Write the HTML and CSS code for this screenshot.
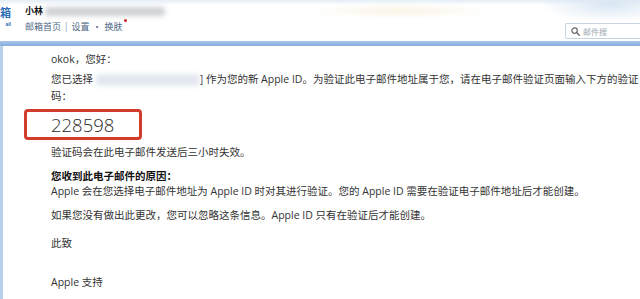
FILE: index.html
```html
<!DOCTYPE html>
<html lang="zh-CN">
<head>
<meta charset="utf-8">
<title>邮箱 - Apple ID 验证</title>
<link rel="stylesheet" href="styles.css">
</head>
<body>
<div class="page">
  <header class="header">
    <div class="logo">
      <span class="logo-cn">箱</span>
      <span class="logo-en">ail</span>
    </div>
    <div class="user">
      <div class="user-name"><b>小林</b><span class="blur-name"></span></div>
      <div class="user-links">
        <span>邮箱首页</span><span class="sep">|</span><span>设置</span><span class="dot-sep">·</span><span class="skin">换肤<i class="red-dot"></i></span>
      </div>
    </div>
    <div class="search">
      <svg class="search-icon" width="9" height="9" viewBox="0 0 10 10"><circle cx="4" cy="4" r="3" fill="none" stroke="#666" stroke-width="1.3"/><line x1="6.2" y1="6.2" x2="9.2" y2="9.2" stroke="#666" stroke-width="1.5" stroke-linecap="round"/></svg>
      <span class="search-text">邮件搜</span>
    </div>
  </header>
  <div class="bar"></div>
  <main class="mail">
    <p class="line">okok，您好：</p>
    <p class="line p2">您已选择 <span class="blur-mail"></span>] 作为您的新 Apple ID。为验证此电子邮件地址属于您，请在电子邮件验证页面输入下方的验证<br>码：</p>
    <div class="code">228598</div>
    <p class="line p-expire">验证码会在此电子邮件发送后三小时失效。</p>
    <p class="line p-reason"><b>您收到此电子邮件的原因：</b><br>Apple 会在您选择电子邮件地址为 Apple ID 时对其进行验证。您的 Apple ID 需要在验证电子邮件地址后才能创建。</p>
    <p class="line p-ignore">如果您没有做出此更改，您可以忽略这条信息。Apple ID 只有在验证后才能创建。</p>
    <p class="line p-regards">此致</p>
    <p class="line p-sign">Apple 支持</p>
  </main>
</div>
</body>
</html>
```

FILE: styles.css
```css
* { box-sizing: border-box; }
html, body { margin: 0; padding: 0; }
body {
  width: 640px;
  height: 299px;
  overflow: hidden;
  background: #fff;
  font-family: "Open Sans", "Noto Sans CJK SC", sans-serif;
  color: #333;
}
.page { width: 640px; height: 299px; display: flex; flex-direction: column; }

.header {
  height: 41px;
  display: flex;
  align-items: flex-start;
  background:
    radial-gradient(ellipse 70px 18px at 610px 4px, #d9e6f3 0%, rgba(217,230,243,0) 100%),
    radial-gradient(ellipse 90px 8px at 400px 11px, #fbf4e6 0%, rgba(251,244,230,0) 100%),
    linear-gradient(to bottom, #e4edf6 0px, #ffffff 5px, #ffffff 100%);
}
.logo { width: 11px; margin-top: 5px; display: flex; flex-direction: column; align-items: flex-end; }
.logo-cn {
  font-family: "Noto Sans CJK SC", sans-serif;
  font-size: 11px; font-weight: 700; color: #2c6db8; line-height: 14px;
}
.logo-en { font-family: "Liberation Sans", sans-serif; font-size: 5px; line-height: 6px; color: #2c6db8; font-weight: 700; margin-top: 2px; }

.user { margin-left: 14px; padding-top: 6px; }
.user-name {
  display: flex; align-items: center;
  font-family: "Noto Sans CJK SC", sans-serif;
  font-size: 9px; line-height: 10px; color: #111;
}
.blur-name {
  display: inline-block; width: 120px; height: 9px; margin-left: 2px;
  background: #cfd1d4; filter: blur(2.5px); border-radius: 3px;
}
.user-links {
  margin-top: 6px;
  font-family: "Noto Sans CJK SC", sans-serif;
  font-size: 9px; line-height: 10px; color: #4e6886;
  display: flex; align-items: center;
}
.sep { margin: 0 4px; color: #7d8fa5; }
.dot-sep { margin: 0 3px; }
.skin { position: relative; }
.red-dot {
  position: absolute; right: -4px; top: -3px;
  width: 3px; height: 3px; border-radius: 50%; background: #d0202a;
}

.search {
  margin-left: auto; margin-top: 23px;
  width: 75px; height: 16px;
  border: 1px solid #c6d3e2; border-right: 0; border-radius: 2px 0 0 2px; background: #fff;
  display: flex; align-items: center; padding-left: 5px; gap: 3px;
}
.search-icon { flex: none; }
.search-text {
  font-family: "Noto Sans CJK SC", sans-serif;
  font-size: 8px; color: #a0a7b0; white-space: nowrap;
}

.bar {
  height: 5px;
  background: linear-gradient(to bottom, #a9c6ea 0%, #86acdd 100%);
}

.mail {
  flex: 1;
  border-left: 3px solid #b8d0ea;
  padding: 5px 0 0 21px;
  font-size: 10.5px;
}
.line { margin: 0 0 0 27px; line-height: 17px; white-space: nowrap; }
.p2 { margin-top: 3px; }
.blur-mail {
  display: inline-block; vertical-align: middle;
  width: 104px; height: 12px;
  background: #e3e9ef; filter: blur(2px); border-radius: 4px;
}
.code {
  margin-top: 4px;
  width: 118px; height: 31px;
  border: 3px solid #d33b2c; border-radius: 4px;
  padding-left: 24px;
  display: flex; align-items: center;
  font-size: 18.5px; font-weight: 300; color: #2a2a2a;
}
.p-expire { margin-top: 4px; }
.p-reason { margin-top: 8px; line-height: 15px; }
.p-reason b { color: #111; }
.p-ignore { margin-top: 8px; }
.p-regards { margin-top: 11px; }
.p-sign { margin-top: 22px; }
```
